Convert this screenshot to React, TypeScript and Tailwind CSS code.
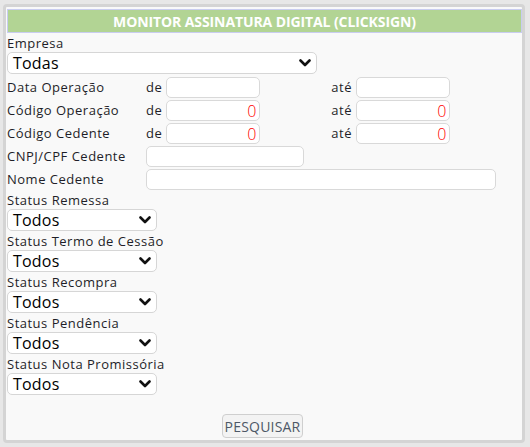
import React from 'react';

const font = { fontFamily: '"Open Sans", "DejaVu Sans", sans-serif' };

const STATUS = [
  'Status Remessa',
  'Status Termo de Cessão',
  'Status Recompra',
  'Status Pendência',
  'Status Nota Promissória',
];

function Chevron() {
  return (
    <svg width="12" height="8" viewBox="0 0 12 8" className="shrink-0">
      <polyline points="1.5,1.5 6,6 10.5,1.5" fill="none" stroke="#111" strokeWidth="2.6" strokeLinecap="round" strokeLinejoin="round" />
    </svg>
  );
}

function Select({ value, className }: { value: string; className: string }) {
  return (
    <div className={`flex h-[22px] items-center justify-between rounded-[5px] border border-[#d6d6d6] bg-white pl-[5px] pr-[5px] ${className}`}>
      <span className="text-[16px] leading-none tracking-[0.2px] text-black">{value}</span>
      <Chevron />
    </div>
  );
}

function Field({ value, className }: { value?: string; className: string }) {
  return (
    <div className={`flex h-[21px] items-center justify-end rounded-[5px] border border-[#d9d9d9] bg-white pr-[2px] ${className}`}>
      {value && <span className="text-[16px] font-light leading-none text-[#ff0000]">{value}</span>}
    </div>
  );
}

function RangeRow({ label, value }: { label: string; value?: string }) {
  return (
    <div className="flex h-[21px] items-center">
      <span className="w-[139px]">{label}</span>
      <span className="w-[20px]">de</span>
      <Field value={value} className="w-[94px]" />
      <span className="w-[96px] pr-[4px] text-right">até</span>
      <Field value={value} className="w-[94px]" />
    </div>
  );
}

export default function App() {
  return (
    <div className="h-[447px] w-[530px] overflow-hidden bg-[#e7e7e7] pl-[3px] pt-[4px]" style={font}>
      <div className="flex h-[439px] w-[522px] flex-col rounded-[4px] border-[3px] border-[#d4d4d4] bg-[#f9f9f9] pl-[1px] pt-[2px] text-[13px] tracking-[0.5px] text-[#1e1e28]">
        <div className="flex h-[24px] w-[515px] items-center justify-center border border-[#c9cdf0] bg-[#b2d494] text-[14px] font-bold tracking-[-0.1px] text-white">
          MONITOR ASSINATURA DIGITAL (CLICKSIGN)
        </div>

        <div className="flex h-[19px] items-end leading-[17px]">Empresa</div>
        <Select value="Todas" className="w-[310px]" />

        <div className="mt-[3px] flex flex-col gap-[2px]">
          <RangeRow label="Data Operação" />
          <RangeRow label="Código Operação" value="0" />
          <RangeRow label="Código Cedente" value="0" />
          <div className="flex h-[21px] items-center">
            <span className="w-[139px]">CNPJ/CPF Cedente</span>
            <Field className="w-[158px]" />
          </div>
          <div className="flex h-[21px] items-center">
            <span className="w-[139px]">Nome Cedente</span>
            <Field className="w-[350px]" />
          </div>
        </div>

        {STATUS.map((s) => (
          <div key={s} className="flex flex-col">
            <div className="flex h-[19px] items-end leading-[17px]">{s}</div>
            <Select value="Todos" className="w-[150px]" />
          </div>
        ))}

        <div className="mt-[19px] flex justify-center pr-[4px]">
          <button
            type="button"
            className="h-[24px] w-[81px] rounded-[4px] border border-[#cfcfcf] bg-[#f3f3f3] text-[14px] tracking-[0.2px] text-[#4d5866]"
          >
            PESQUISAR
          </button>
        </div>
      </div>
    </div>
  );
}
